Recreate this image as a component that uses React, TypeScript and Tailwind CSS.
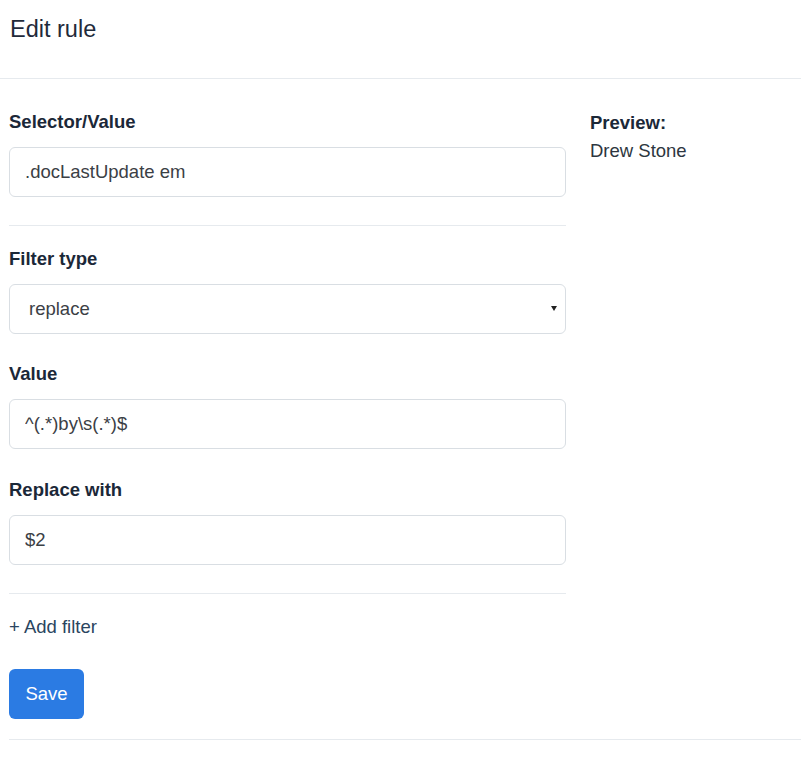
import { useState } from 'react';

const Field = ({ label, value }: { label: string; value: string }) => (
  <div>
    <label className="block h-[26px] leading-[26px] text-[18.5px] font-bold text-[#1b2838] mb-[12px]">{label}</label>
    <input
      type="text"
      defaultValue={value}
      className="block w-full h-[50px] px-[15px] rounded-[6px] border border-[#d9dee3] bg-white text-[18.5px] text-[#3b4045] outline-none"
    />
  </div>
);

const App = () => {
  const [filterType, setFilterType] = useState('replace');

  return (
    <div className="w-[801px] bg-white font-['Liberation_Sans',Arial,sans-serif]">
      {/* Заголовок */}
      <h1 className="px-[10px] pt-[14px] h-[44px] leading-[30px] text-[23.5px] font-normal text-[#1f2a3a]">Edit rule</h1>
      <div className="mt-[34px] h-px bg-[#e6eaee]" />

      <div className="flex pt-[30px]">
        {/* Форма */}
        <div className="w-[557px] ml-[9px]">
          <Field label="Selector/Value" value=".docLastUpdate em" />
          <div className="mt-[28px] h-px bg-[#e6eaee]" />

          <div className="mt-[20px]">
            <label className="block h-[26px] leading-[26px] text-[18.5px] font-bold text-[#1b2838] mb-[12px]">Filter type</label>
            <div className="relative">
              <select
                value={filterType}
                onChange={e => setFilterType(e.target.value)}
                className="block w-full h-[50px] pl-[19px] pr-8 appearance-none rounded-[6px] border border-[#d9dee3] bg-white text-[18.5px] text-[#3b4045] outline-none"
              >
                <option value="replace">replace</option>
                <option value="remove">remove</option>
              </select>
              <svg className="absolute right-[9px] top-[22px] pointer-events-none" width="6" height="5" viewBox="0 0 6 5">
                <path d="M0 0h6L3 5z" fill="#222" />
              </svg>
            </div>
          </div>

          <div className="mt-[27px]">
            <Field label="Value" value="^(.*)by\s(.*)$" />
          </div>
          <div className="mt-[28px]">
            <Field label="Replace with" value="$2" />
          </div>
          <div className="mt-[28px] h-px bg-[#e6eaee]" />

          <button className="block mt-[20px] h-[26px] leading-[26px] text-[18.5px] text-[#2a4560]">+ Add filter</button>

          <button className="block mt-[29px] w-[75px] h-[50px] rounded-[6px] bg-[#2b7be3] text-white text-[18.5px] font-normal">Save</button>
        </div>

        {/* Предпросмотр */}
        <div className="ml-[24px]">
          <div className="h-[28px] leading-[28px] text-[18.5px] font-bold text-[#1b2838]">Preview:</div>
          <div className="h-[28px] leading-[28px] text-[18.5px] text-[#2d3640]">Drew Stone</div>
        </div>
      </div>

      <div className="ml-[9px] mt-[20px] h-px bg-[#e6eaee]" />
    </div>
  );
};

export default App;
